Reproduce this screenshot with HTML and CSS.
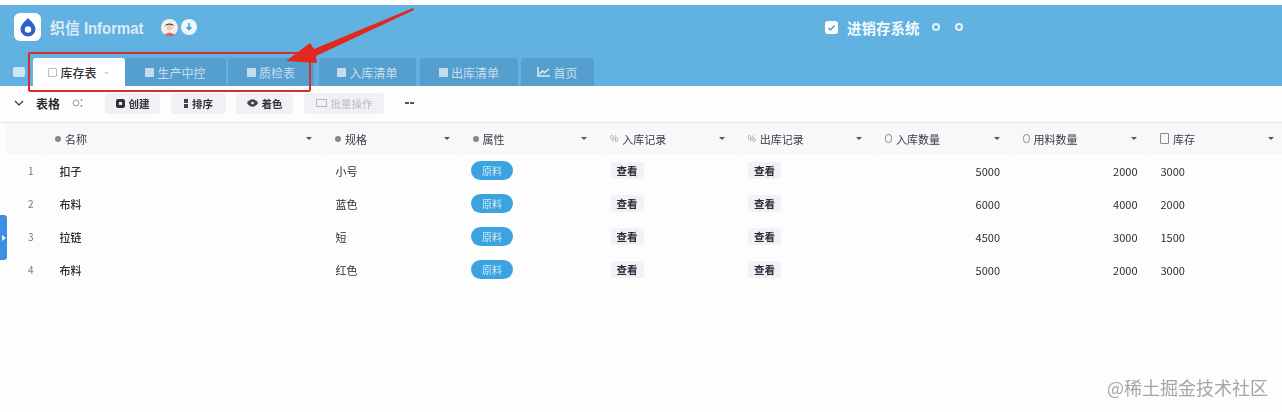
FILE: index.html
```html
<!DOCTYPE html>
<html lang="zh-CN">
<head>
    <meta charset="UTF-8">
    <title>织信 Informat</title>
    <link rel="stylesheet" href="styles.css">
</head>
<body>
    <div class="app">
        <!-- Top bar -->
        <header class="topbar">
            <div class="brand-row">
                <div class="brand">
                    <span class="logo">
                        <svg width="18" height="20" viewBox="0 0 18 20"><path d="M9 1C6 4.500 1.500 7.500 1.500 12a7.500 7.500 0 0 0 15 0C16.500 7.500 12 4.500 9 1z" fill="#2b62c9"/><circle cx="9" cy="12.500" r="3.200" fill="#fff"/></svg>
                    </span>
                    <span class="brand-name">织信 Informat</span>
                    <span class="avatar">
                        <svg width="17" height="17" viewBox="0 0 17 17"><circle cx="8.500" cy="8.500" r="8.500" fill="#f6eeea"/><path d="M4 7.500C4 3.500 13 3.500 13 7.500L11.500 6H5.500z" fill="#333"/><circle cx="8.500" cy="8.500" r="3" fill="#f2c9b8"/><path d="M3.500 17C4 12.500 13 12.500 13.500 17z" fill="#d9675f"/></svg>
                    </span>
                    <span class="round-btn">
                        <svg width="10" height="10" viewBox="0 0 10 10"><path d="M5 1v6M2.500 5L5 7.500 7.500 5" fill="none" stroke="#4a9fd6" stroke-width="1.600"/></svg>
                    </span>
                </div>
                <div class="system">
                    <span class="check">
                        <svg width="9" height="9" viewBox="0 0 9 9"><path d="M1.500 5l2 2 4-4.500" fill="none" stroke="#4a9fd6" stroke-width="1.500"/></svg>
                    </span>
                    <span class="system-name">进销存系统</span>
                    <span class="dot"></span>
                    <span class="dot dot-last"></span>
                </div>
            </div>
            <nav class="tabs">
                <span class="tab-add"></span>
                <a class="tab tab-active"><i class="tab-icon"></i>库存表<span class="tab-caret">⌄</span></a>
                <a class="tab tab-2"><i class="tab-icon"></i>生产中控</a>
                <a class="tab tab-3"><i class="tab-icon"></i>质检表</a>
                <a class="tab tab-4"><i class="tab-icon"></i>入库清单</a>
                <a class="tab tab-5"><i class="tab-icon"></i>出库清单</a>
                <a class="tab tab-6">
                    <svg width="13" height="10" viewBox="0 0 13 10"><path d="M1 0v9h12M2.500 7l3-3 2 1.500L12 2" fill="none" stroke="#dcecf7" stroke-width="1.500"/></svg>
                    首页
                </a>
            </nav>
        </header>

        <!-- Toolbar -->
        <div class="toolbar">
            <svg class="chevron" width="10" height="6" viewBox="0 0 10 6"><path d="M1 1l4 4 4-4" fill="none" stroke="#333" stroke-width="1.200"/></svg>
            <span class="view-name">表格</span>
            <svg class="view-icon" width="11" height="10" viewBox="0 0 11 10"><circle cx="4" cy="5" r="3" fill="none" stroke="#999"/><circle cx="9.500" cy="2" r="1" fill="#999"/><circle cx="9.500" cy="8" r="1" fill="#999"/></svg>
            <button class="tool-btn btn-create"><i class="ico-create"></i>创建</button>
            <button class="tool-btn btn-sort"><i class="ico-sort"></i>排序</button>
            <button class="tool-btn btn-color">
                <svg width="11" height="8" viewBox="0 0 11 8"><path d="M0 4c3-5 8-5 11 0-3 5-8 5-11 0z" fill="#444"/><circle cx="5.500" cy="4" r="1.300" fill="#eef1f5"/></svg>
                着色
            </button>
            <button class="tool-btn btn-batch"><i class="ico-batch"></i>批量操作</button>
            <span class="more"></span>
        </div>

        <!-- Data table -->
        <table class="grid">
            <colgroup>
                <col class="col-index"><col class="col-name"><col class="col-std"><col class="col-std">
                <col class="col-std"><col class="col-std"><col class="col-std"><col class="col-std"><col>
            </colgroup>
            <thead>
                <tr>
                    <th></th>
                    <th><span class="th-in"><i class="ico-dot"></i>名称<b class="sort"></b></span></th>
                    <th><span class="th-in"><i class="ico-dot"></i>规格<b class="sort"></b></span></th>
                    <th><span class="th-in"><i class="ico-dot"></i>属性<b class="sort"></b></span></th>
                    <th><span class="th-in"><span class="ico-txt">%</span>入库记录<b class="sort"></b></span></th>
                    <th><span class="th-in"><span class="ico-txt">%</span>出库记录<b class="sort"></b></span></th>
                    <th><span class="th-in"><i class="ico-pin"></i>入库数量<b class="sort"></b></span></th>
                    <th><span class="th-in"><i class="ico-pin"></i>用料数量<b class="sort"></b></span></th>
                    <th><span class="th-in"><i class="ico-file"></i>库存<b class="sort"></b></span></th>
                </tr>
            </thead>
            <tbody>
                <tr>
                    <td class="idx">1</td><td class="name-cell">扣子</td><td>小号</td>
                    <td><span class="pill">原料</span></td>
                    <td><span class="link-tag">查看</span></td><td><span class="link-tag">查看</span></td>
                    <td class="num">5000</td><td class="num">2000</td><td>3000</td>
                </tr>
                <tr>
                    <td class="idx">2</td><td class="name-cell">布料</td><td>蓝色</td>
                    <td><span class="pill">原料</span></td>
                    <td><span class="link-tag">查看</span></td><td><span class="link-tag">查看</span></td>
                    <td class="num">6000</td><td class="num">4000</td><td>2000</td>
                </tr>
                <tr>
                    <td class="idx">3</td><td class="name-cell">拉链</td><td>短</td>
                    <td><span class="pill">原料</span></td>
                    <td><span class="link-tag">查看</span></td><td><span class="link-tag">查看</span></td>
                    <td class="num">4500</td><td class="num">3000</td><td>1500</td>
                </tr>
                <tr>
                    <td class="idx">4</td><td class="name-cell">布料</td><td>红色</td>
                    <td><span class="pill">原料</span></td>
                    <td><span class="link-tag">查看</span></td><td><span class="link-tag">查看</span></td>
                    <td class="num">5000</td><td class="num">2000</td><td>3000</td>
                </tr>
            </tbody>
        </table>
    </div>

    <!-- Things lying over the page -->
    <div class="side-handle"></div>
    <div class="red-box"></div>
    <svg class="red-arrow" width="140" height="60" viewBox="0 0 140 60">
        <path d="M130 2L31 43 27 37 3 55 34 57 33 50 131 4z" fill="#e0281f"/>
    </svg>
    <div class="watermark">@稀土掘金技术社区</div>
</body>
</html>
```

FILE: styles.css
```css
:root {
    --blue: #61b1e1;
    --tab: #559fcf;
    --border: #eef0f3;
    --text: #2b2b33;
}

* {
    margin: 0;
    padding: 0;
    box-sizing: border-box;
}

html, body {
    height: 412px;
    overflow: hidden;
}

body {
    position: relative;
    background: #fdfdfe;
    color: var(--text);
    font-family: "Noto Sans CJK SC", "Liberation Sans", sans-serif;
    font-size: 11px;
}

.app {
    padding-top: 5px;
    filter: blur(0.5px);
}

/* Top bar */
.topbar {
    height: 81px;
    background: var(--blue);
    display: flex;
    flex-direction: column;
    justify-content: space-between;
}

.brand-row {
    display: flex;
    padding: 8px 0 0 14px;
}

.brand {
    display: flex;
    align-items: center;
    height: 28px;
}

.logo {
    width: 27px;
    height: 28px;
    background: #fff;
    border-radius: 6px;
    display: flex;
    align-items: center;
    justify-content: center;
}

.brand-name {
    margin-left: 9px;
    width: 111px;
    color: #dcecf7;
    font-family: "Liberation Sans", "Noto Sans CJK SC", sans-serif;
    font-size: 16px;
    font-weight: 700;
    white-space: nowrap;
    transform: scaleX(0.93);
    transform-origin: left;
}

.avatar {
    height: 17px;
}

.round-btn {
    width: 16px;
    height: 16px;
    margin-left: 3px;
    border-radius: 50%;
    background: #eef6fb;
    display: flex;
    align-items: center;
    justify-content: center;
}

.system {
    margin-left: 628px;
    height: 28px;
    display: flex;
    align-items: center;
    color: #f3f9fd;
}

.check {
    width: 13px;
    height: 13px;
    border-radius: 3px;
    background: #fff;
    display: flex;
    align-items: center;
    justify-content: center;
}

.system-name {
    margin-left: 9px;
    font-size: 14.500px;
    font-weight: 700;
}

.dot {
    width: 8px;
    height: 8px;
    margin-left: 12px;
    border: 2px solid #e4f1f9;
    border-radius: 50%;
}

.dot-last {
    margin-left: 15px;
}

/* Tabs */
.tabs {
    display: flex;
    align-items: flex-end;
    height: 28px;
    padding-left: 13px;
}

.tab-add {
    width: 12px;
    height: 10px;
    margin: 0 8px 9px 0;
    background: #cfe5f3;
    border-radius: 2px;
}

.tab {
    height: 28px;
    background: var(--tab);
    color: #c6deef;
    border-radius: 3px 3px 0 0;
    display: flex;
    align-items: center;
    justify-content: center;
    gap: 3px;
    font-size: 12px;
}

.tab-icon {
    width: 9px;
    height: 9px;
    background: #c3ddef;
    border-radius: 1px;
}

.tab-active {
    width: 92px;
    background: #fff;
    color: #34343c;
    font-weight: 500;
}

.tab-active .tab-icon {
    background: none;
    border: 1px solid #bbb;
}

.tab-caret {
    margin: -3px 0 0 3px;
    color: #aaa;
    font-size: 8px;
}

.tab-2 { width: 101px; }
.tab-3 { width: 86px; margin-left: 2px; }
.tab-4 { width: 97px; margin-left: 5px; }
.tab-5 { width: 98px; margin-left: 4px; }
.tab-6 { width: 73px; margin-left: 3px; }

/* Toolbar */
.toolbar {
    height: 37px;
    border-bottom: 1px solid #e6e8ec;
    display: flex;
    align-items: center;
    padding: 0 0 2px 14px;
}

.view-name {
    margin-left: 12px;
    font-weight: 700;
    font-size: 12px;
}

.view-icon {
    margin-left: 12px;
}

.tool-btn {
    height: 21px;
    border: none;
    border-radius: 3px;
    background: #eff1f5;
    color: #33333b;
    font-family: inherit;
    font-size: 10.500px;
    font-weight: 700;
    display: flex;
    align-items: center;
    justify-content: center;
    gap: 4px;
}

.btn-create { width: 55px; margin-left: 22px; }
.btn-sort { width: 55px; margin-left: 11px; }
.btn-color { width: 57px; margin-left: 10px; }

.btn-batch {
    width: 80px;
    margin-left: 11px;
    color: #b9bcc4;
    font-weight: 400;
}

.ico-create {
    width: 9px;
    height: 9px;
    border: 3px solid #333;
    border-radius: 2px;
}

.ico-sort {
    width: 4px;
    height: 9px;
    background: linear-gradient(#444 40%, transparent 40% 60%, #444 60%);
}

.ico-batch {
    width: 11px;
    height: 8px;
    border: 1px solid #bbb;
}

.more {
    width: 9px;
    height: 2px;
    margin-left: 21px;
    background: linear-gradient(90deg, #555 40%, transparent 40% 60%, #555 60%);
}

/* Table */
.grid {
    width: 1282px;
    table-layout: fixed;
    border-collapse: collapse;
    margin-left: 5px;
}

.col-index { width: 40px; }
.col-name { width: 280px; }
.col-std { width: 137.500px; }

.grid th {
    height: 31px;
    background: #f7f8fa;
    font-size: 11px;
    font-weight: 400;
    text-align: left;
    color: #3b3b43;
}

.grid td {
    height: 33px;
    padding: 0 10px;
    font-size: 11px;
    border-left: 1px solid #f8f9fb;
}

.th-in {
    display: flex;
    align-items: center;
    gap: 4px;
    padding: 0 14px 0 10px;
    position: relative;
}

.sort {
    position: absolute;
    right: 13px;
    top: 6px;
    border: 3px solid transparent;
    border-top-color: #555;
}

.ico-dot {
    width: 6px;
    height: 6px;
    background: #888;
    border-radius: 50%;
}

.ico-txt {
    color: #999;
    font-size: 9px;
}

.ico-pin {
    width: 7px;
    height: 9px;
    border: 1px solid #999;
    border-radius: 50%;
}

.ico-file {
    width: 9px;
    height: 11px;
    border: 1px solid #888;
    border-radius: 1px;
}

.grid .idx {
    padding: 0 0 0 12px;
    text-align: center;
    color: #777;
    font-size: 10px;
    border-left: none;
}

.grid .name-cell {
    padding-left: 14px;
    font-weight: 500;
}

.grid .num {
    text-align: right;
    padding-right: 12px;
}

.pill {
    display: inline-block;
    width: 42px;
    height: 19px;
    margin-left: -2px;
    line-height: 19px;
    text-align: center;
    border-radius: 10px;
    background: #3ba3e0;
    color: #d6eafa;
    font-size: 10px;
}

.link-tag {
    display: inline-block;
    width: 33px;
    height: 17px;
    line-height: 17px;
    text-align: center;
    border-radius: 2px;
    background: #f0f2f8;
    font-weight: 700;
    font-size: 10.500px;
}

/* Overlays */
.side-handle {
    position: absolute;
    left: 0;
    top: 215px;
    width: 7px;
    height: 45px;
    background: #3c8fe3;
    border-radius: 0 3px 3px 0;
    display: flex;
    align-items: center;
    padding-left: 2px;
}

.side-handle::before {
    content: "";
    border: 3px solid transparent;
    border-left: 4px solid #e8f2fc;
    border-right: none;
}

.red-box {
    position: absolute;
    left: 28px;
    top: 52px;
    width: 283px;
    height: 40px;
    border: 2px solid #d42f2e;
    border-radius: 2px;
    filter: blur(0.4px);
}

.red-arrow {
    position: absolute;
    left: 283px;
    top: 6px;
}

.watermark {
    position: absolute;
    right: 14px;
    top: 374px;
    color: #a5a5a5;
    font-size: 18px;
    font-family: "Noto Sans CJK SC", sans-serif;
    filter: blur(0.4px);
}
```
